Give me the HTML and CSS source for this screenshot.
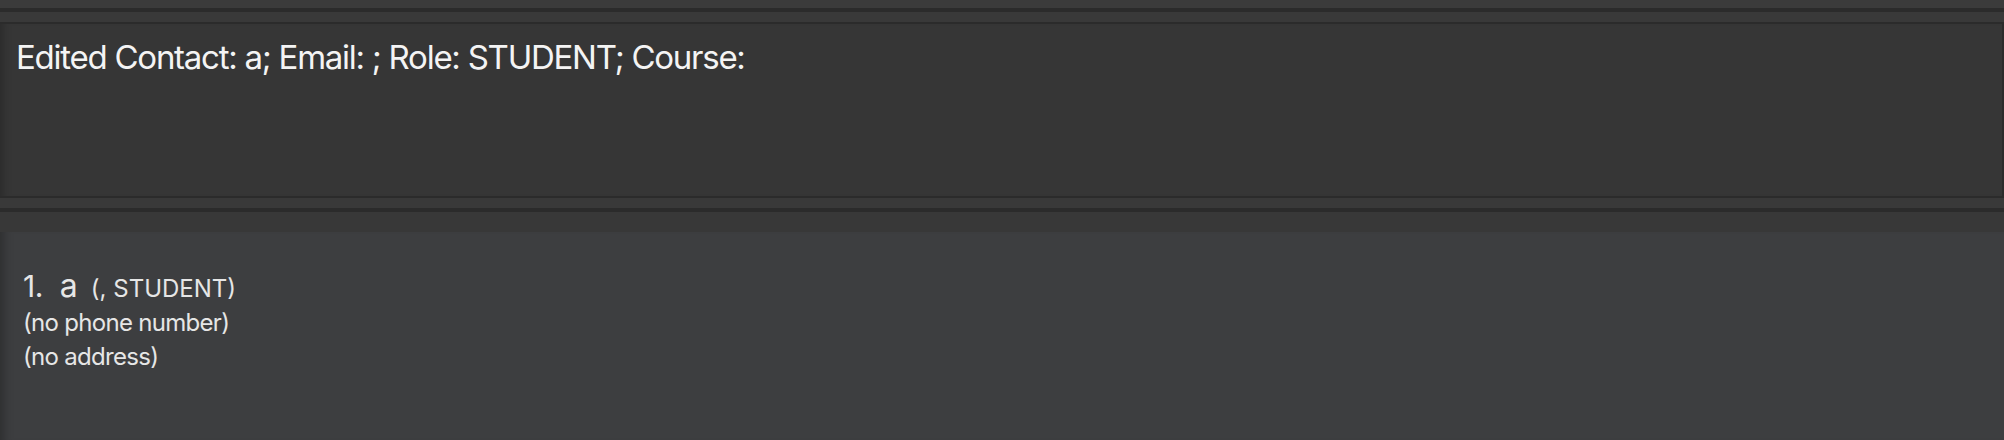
FILE: index.html
```html
<!DOCTYPE html>
<html>
<head>
<meta charset="utf-8">
<link rel="stylesheet" href="styles.css">
</head>
<body>
<div class="app">
  <div class="strip strip-top"></div>
  <div class="divider"></div>
  <div class="strip strip-mid"></div>
  <div class="result">
    <div class="result-text">Edited Contact: a; Email: ; Role: STUDENT; Course:</div>
  </div>
  <div class="strip strip-low"></div>
  <div class="divider"></div>
  <div class="strip strip-pre"></div>
  <div class="list">
    <div class="card">
      <div class="card-head">
        <span class="idx">1.</span>
        <span class="name">a</span>
        <span class="meta">(, STUDENT)</span>
      </div>
      <div class="line">(no phone number)</div>
      <div class="line">(no address)</div>
    </div>
  </div>
</div>
</body>
</html>
```

FILE: styles.css
```css
html, body {
  margin: 0;
  padding: 0;
  background: #3a3a3a;
  overflow: hidden;
}
.app {
  width: 2004px;
  height: 440px;
  display: flex;
  flex-direction: column;
  font-family: Inter, "Liberation Sans", sans-serif;
}
.strip { background: #393939; }
.strip-top { height: 8px; background: #3b3b3b; }
.strip-mid { height: 10px; }
.strip-low { height: 10px; }
.strip-pre { height: 20px; background: #383838; }
.divider { height: 4px; background: #2b2b2b; }
.result {
  height: 172px;
  background: #363636;
  border-top: 2px solid #2b2b2b;
  border-bottom: 2px solid #2b2b2b;
  border-right: 2px solid #2b2b2b;
  width: 2002px;
  box-sizing: content-box;
  box-shadow: inset 10px 0 10px -8px rgba(0,0,0,0.25);
}
.result-text {
  color: #f4f4f4;
  font-size: 33px;
  line-height: 40px;
  padding: 13px 0 0 16px;
  letter-spacing: -1.25px;
}
.list {
  flex: 1;
  background: #3d3e40;
  box-shadow: inset 12px 0 10px -8px rgba(0,0,0,0.25);
}
.card {
  padding: 34px 0 0 23px;
  color: #e6e6e6;
}
.card-head {
  display: flex;
  align-items: baseline;
  height: 40px;
}
.idx { font-size: 30px; margin-right: 17px; letter-spacing: -0.5px; }
.name { font-size: 32px; margin-right: 13px; }
.meta { font-size: 24px; letter-spacing: 0; }
.line {
  font-size: 24px;
  line-height: 34px;
  letter-spacing: -0.7px;
}
```
